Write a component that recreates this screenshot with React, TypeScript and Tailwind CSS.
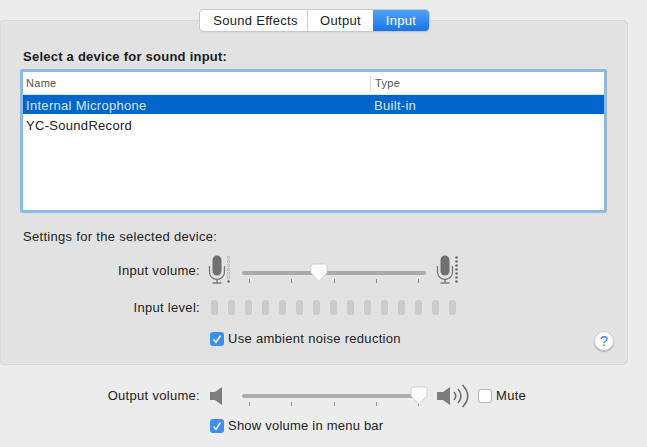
import React from "react";

function Mic({ full }: { full?: boolean }) {
  const dots = [0, 1, 2, 3, 4, 5, 6];
  return (
    <svg width="23" height="30" viewBox="0 0 23 30" className="shrink-0">
      <rect x="4.5" y="0.5" width="9" height="20" rx="4.5" fill="#6f6f6f" />
      <path d="M1.5 11 v6 a7.5 7.5 0 0 0 15 0 v-6" fill="none" stroke="#7c7c7c" strokeWidth="1.3" />
      <path d="M9 24 v3.5 M4.5 28 h9" fill="none" stroke="#7c7c7c" strokeWidth="1.4" />
      {dots.map((i) =>
        full || i === 6 ? (
          <circle key={i} cx="20.5" cy={2.5 + i * 4} r="1.3" fill="#6e6e6e" />
        ) : (
          <circle key={i} cx="20.5" cy={2.5 + i * 4} r="1.2" fill="none" stroke="#a8a8a8" strokeWidth="0.8" />
        )
      )}
    </svg>
  );
}

function Slider({ width, thumb }: { width: number; thumb: number }) {
  return (
    <div className="relative h-[24px]" style={{ width }}>
      <div className="absolute left-0 right-0 top-[5px] h-[4px] rounded-full bg-[#ababab]" />
      <div className="absolute left-[7px] top-[13px] flex w-[170px] justify-between">
        {[0, 1, 2, 3, 4].map((i) => (
          <div key={i} className="h-[4px] w-px bg-[#8e8e8e]" />
        ))}
      </div>
      <svg width="18" height="20" viewBox="0 0 18 20" className="absolute top-[-3px]" style={{ left: thumb }}>
        <path d="M3.5 1 H14.5 a2.5 2.5 0 0 1 2.5 2.5 V10 L9 18.5 L1 10 V3.5 A2.5 2.5 0 0 1 3.5 1 Z" fill="#fbfbfb" stroke="#c9c9c9" strokeWidth="0.8" />
      </svg>
    </div>
  );
}

function Check({ on }: { on: boolean }) {
  return on ? (
    <div className="flex h-[14px] w-[14px] shrink-0 items-center justify-center rounded-[3px] bg-[#3b8fef]">
      <svg width="10" height="10" viewBox="0 0 10 10">
        <path d="M1.5 5.5 L4 8.2 L8.5 1.5" fill="none" stroke="#fff" strokeWidth="1.5" />
      </svg>
    </div>
  ) : (
    <div className="h-[14px] w-[14px] shrink-0 rounded-[3px] border border-[#b5b5b5] bg-white" />
  );
}

function Label({ children }: { children: React.ReactNode }) {
  return <div className="w-[200px] shrink-0 text-right">{children}</div>;
}

export default function App() {
  return (
    <div
      className="relative h-[447px] w-[647px] overflow-hidden bg-[#ececec] text-[13px] leading-[16px] tracking-[0.3px] text-[#222]"
      style={{ fontFamily: '"Liberation Sans", Arial, sans-serif' }}
    >
      <div className="relative z-10 flex justify-center pt-[10px] pr-[18px]">
        <div className="flex h-[21px] overflow-hidden rounded-[4px] bg-white shadow-[0_0_0_1px_#c8c8c8,0_1px_1px_#aaa]">
          <div className="flex w-[108px] items-center justify-center border-r border-[#cfcfcf] pl-[4px]">Sound Effects</div>
          <div className="flex w-[65px] items-center justify-center">Output</div>
          <div className="flex w-[56px] items-center justify-center bg-gradient-to-b from-[#4fa3f7] to-[#1a73e8] text-white">Input</div>
        </div>
      </div>

      <div className="mt-[-11px] h-[345px] w-[628px] rounded-r-[5px] rounded-l-[3px] border border-[#d9d9d9] bg-[#e2e2e2] px-[19px]">
        <div className="pt-[28px] pl-[3px] font-bold tracking-[0.24px] text-[#1c1c1c]">Select a device for sound input:</div>

        <div className="mt-[4px] h-[144px] w-[587px] rounded-[2px] border-[3px] border-[#8db9e5] bg-white">
          <div className="flex h-[23px] items-center border-b border-[#e3e3e3] text-[11px] tracking-[0.3px] text-[#555]">
            <div className="w-[348px] border-r border-[#d9d9d9] pl-[3px]">Name</div>
            <div className="pl-[4px]">Type</div>
          </div>
          <div className="flex h-[19px] items-center bg-[#0066cc] pt-[2px] text-[#d9e8fa]">
            <div className="w-[351px] pl-[3px]">Internal Microphone</div>
            <div>Built-in</div>
          </div>
          <div className="flex h-[21px] items-center pt-[2px] pl-[3px] text-[#222]">YC-SoundRecord</div>
        </div>

        <div className="pt-[16px] pl-[3px]">Settings for the selected device:</div>

        <div className="mt-[10px] flex h-[30px] items-center">
          <div className="-ml-[20px] pt-[2px]">
            <Label>Input volume:</Label>
          </div>
          <div className="ml-[8px]"><Mic /></div>
          <div className="ml-[11px] pt-[15px]"><Slider width={184} thumb={68} /></div>
          <div className="ml-[10px]"><Mic full /></div>
        </div>

        <div className="mt-[14px] flex h-[16px] items-center">
          <div className="-ml-[20px] pt-[1px]"><Label>Input level:</Label></div>
          <div className="ml-[11px] flex gap-[10px]">
            {Array.from({ length: 15 }).map((_, i) => (
              <div key={i} className="h-[15px] w-[7px] rounded-[3px] bg-[#cbcbcb]" />
            ))}
          </div>
        </div>

        <div className="relative mt-[16px] flex items-center pl-[190px]">
          <Check on />
          <span className="ml-[4px]">Use ambient noise reduction</span>
          <div className="absolute left-[574px] top-0 flex h-[20px] w-[20px] items-center justify-center rounded-full border border-[#cfcfcf] bg-white text-[15px] text-[#2f7fdc] shadow-[0_1px_1px_#aaa]">?</div>
        </div>
      </div>

      <div className="mt-[21px] flex h-[20px] items-center">
        <Label>Output volume:</Label>
        <svg width="14" height="18" viewBox="0 0 14 18" className="ml-[10px] shrink-0">
          <path d="M0 5 H5 L12 0 V18 L5 13 H0 Z" fill="#7d7d7d" />
        </svg>
        <div className="ml-[18px] pt-[9px]"><Slider width={178} thumb={168} /></div>
        <svg width="32" height="26" viewBox="0 0 32 26" className="ml-[17px] shrink-0">
          <path d="M0 9 H6 L13 4 V22 L6 17 H0 Z" fill="#7d7d7d" />
          <path d="M17 9 Q20.5 13 17 17 M21 6 Q27 13 21 20 M25.5 2 Q36 13 25.5 24" fill="none" stroke="#6f6f6f" strokeWidth="1.6" />
        </svg>
        <div className="ml-[9px]"><Check on={false} /></div>
        <span className="ml-[4px]">Mute</span>
      </div>

      <div className="mt-[12px] flex items-center pl-[210px] tracking-[0.22px]">
        <Check on />
        <span className="ml-[4px]">Show volume in menu bar</span>
      </div>
    </div>
  );
}
